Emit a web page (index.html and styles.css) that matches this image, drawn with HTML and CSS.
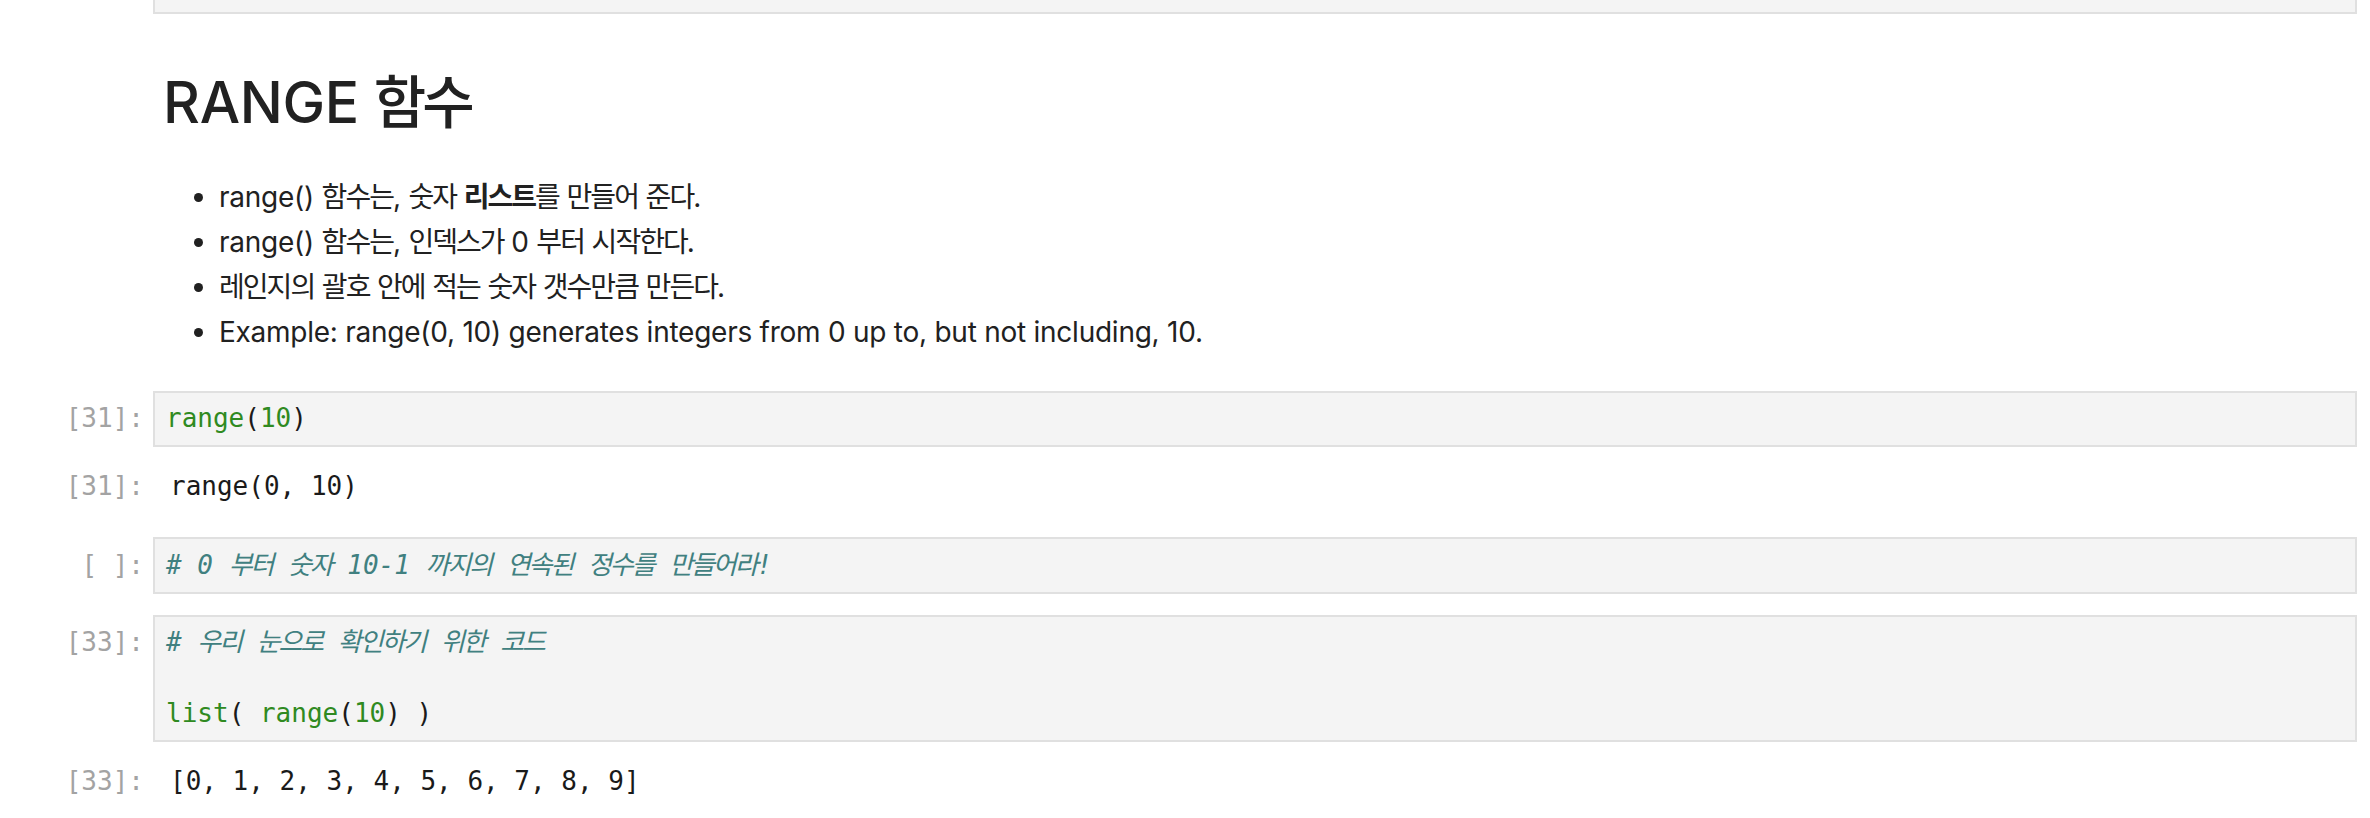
FILE: index.html
```html
<!DOCTYPE html>
<html lang="ko">
<head>
<meta charset="utf-8">
<title>RANGE 함수</title>
<link rel="stylesheet" href="styles.css">
</head>
<body>
<div class="notebook">

  <div class="cell cell-tail">
    <div class="row">
      <div class="prompt"></div>
      <div class="editor editor-tail"></div>
    </div>
  </div>

  <div class="cell cell-md">
    <div class="row">
      <div class="prompt"></div>
      <div class="markdown">
        <h1>RANGE <span class="ko">함수</span></h1>
        <ul>
          <li>range() <span class="ko">함수는</span>, <span class="ko">숫자</span> <strong class="ko">리스트</strong><span class="ko">를</span> <span class="ko">만들어</span> <span class="ko">준다</span>.</li>
          <li>range() <span class="ko">함수는</span>, <span class="ko">인덱스가</span> 0 <span class="ko">부터</span> <span class="ko">시작한다</span>.</li>
          <li><span class="ko">레인지의</span> <span class="ko">괄호</span> <span class="ko">안에</span> <span class="ko">적는</span> <span class="ko">숫자</span> <span class="ko">갯수만큼</span> <span class="ko">만든다</span>.</li>
          <li>Example: range(0, 10) generates integers from 0 up to, but not including, 10.</li>
        </ul>
      </div>
    </div>
  </div>

  <div class="cell cell-31">
    <div class="row">
      <div class="prompt prompt-in">[31]:</div>
      <div class="editor"><div class="line"><span class="builtin">range</span>(<span class="num">10</span>)</div></div>
    </div>
    <div class="row">
      <div class="prompt prompt-out">[31]:</div>
      <div class="output">range(0, 10)</div>
    </div>
  </div>

  <div class="cell cell-empty">
    <div class="row">
      <div class="prompt prompt-in">[ ]:</div>
      <div class="editor"><div class="line"><span class="comment"># 0 <span class="ko">부터</span> <span class="ko">숫자</span> 10-1 <span class="ko">까지의</span> <span class="ko">연속된</span> <span class="ko">정수를</span> <span class="ko">만들어라</span>!</span></div></div>
    </div>
  </div>

  <div class="cell cell-33">
    <div class="row">
      <div class="prompt prompt-in">[33]:</div>
      <div class="editor">
        <div class="line"><span class="comment"># <span class="ko">우리</span> <span class="ko">눈으로</span> <span class="ko">확인하기</span> <span class="ko">위한</span> <span class="ko">코드</span></span></div>
        <div class="line"></div>
        <div class="line"><span class="builtin">list</span>( <span class="builtin">range</span>(<span class="num">10</span>) )</div>
      </div>
    </div>
    <div class="row">
      <div class="prompt prompt-out">[33]:</div>
      <div class="output">[0, 1, 2, 3, 4, 5, 6, 7, 8, 9]</div>
    </div>
  </div>

</div>
</body>
</html>
```

FILE: styles.css
```css
html, body {
  margin: 0;
  padding: 0;
  background: #ffffff;
}

body {
  font-family: Inter, "Noto Sans", "Noto Sans CJK KR", sans-serif;
  color: #212121;
}

.notebook {
  display: flex;
  flex-direction: column;
  padding-right: 13px;
}

.row {
  display: grid;
  grid-template-columns: 153px 1fr;
}

.prompt {
  font-family: "DejaVu Sans Mono", "Noto Sans CJK KR", monospace;
  font-size: 26px;
  line-height: 35.5px;
  color: #a3a3a3;
  text-align: right;
  padding-right: 9px;
  white-space: pre;
}

.prompt-in {
  padding-top: 10.5px;
}

.prompt-out {
  padding-top: 22px;
}

.editor {
  background: #f4f4f4;
  border: 2px solid #e0e0e0;
  padding: 8.5px 13px 8.5px 11px;
  font-family: "DejaVu Sans Mono", "Noto Sans CJK KR", monospace;
  font-size: 26px;
  line-height: 35.5px;
  color: #1a1a1a;
  min-width: 0;
}

.line {
  height: 35.5px;
  white-space: pre;
}

.editor-tail {
  border-top: none;
  height: 12px;
  padding: 0;
}

.builtin {
  color: #2f8a21;
}

.num {
  color: #2f8a21;
}

.comment {
  color: #408080;
  font-style: italic;
}

.editor .ko {
  letter-spacing: -0.08em;
  line-height: 1;
}

.output {
  font-family: "DejaVu Sans Mono", "Noto Sans CJK KR", monospace;
  font-size: 26px;
  line-height: 35.5px;
  color: #1a1a1a;
  padding: 22px 0 12.5px 17px;
  white-space: pre;
}

.cell-md {
  margin-top: 60px;
}

.markdown {
  padding-left: 10px;
}

.markdown h1 {
  margin: 0;
  font-size: 57px;
  font-weight: 500;
  line-height: 58px;
  letter-spacing: -0.3px;
  color: #212121;
}

.markdown .ko {
  letter-spacing: -0.07em;
  line-height: 1;
}

.markdown ul {
  margin: 43px 0 0 0;
  padding-left: 56px;
  font-size: 28px;
  line-height: 45px;
  letter-spacing: -0.25px;
}

.markdown strong {
  font-weight: 700;
}

.cell-31 {
  margin-top: 35.5px;
}

.cell-empty {
  margin-top: 20px;
}

.cell-33 {
  margin-top: 21px;
}
```
